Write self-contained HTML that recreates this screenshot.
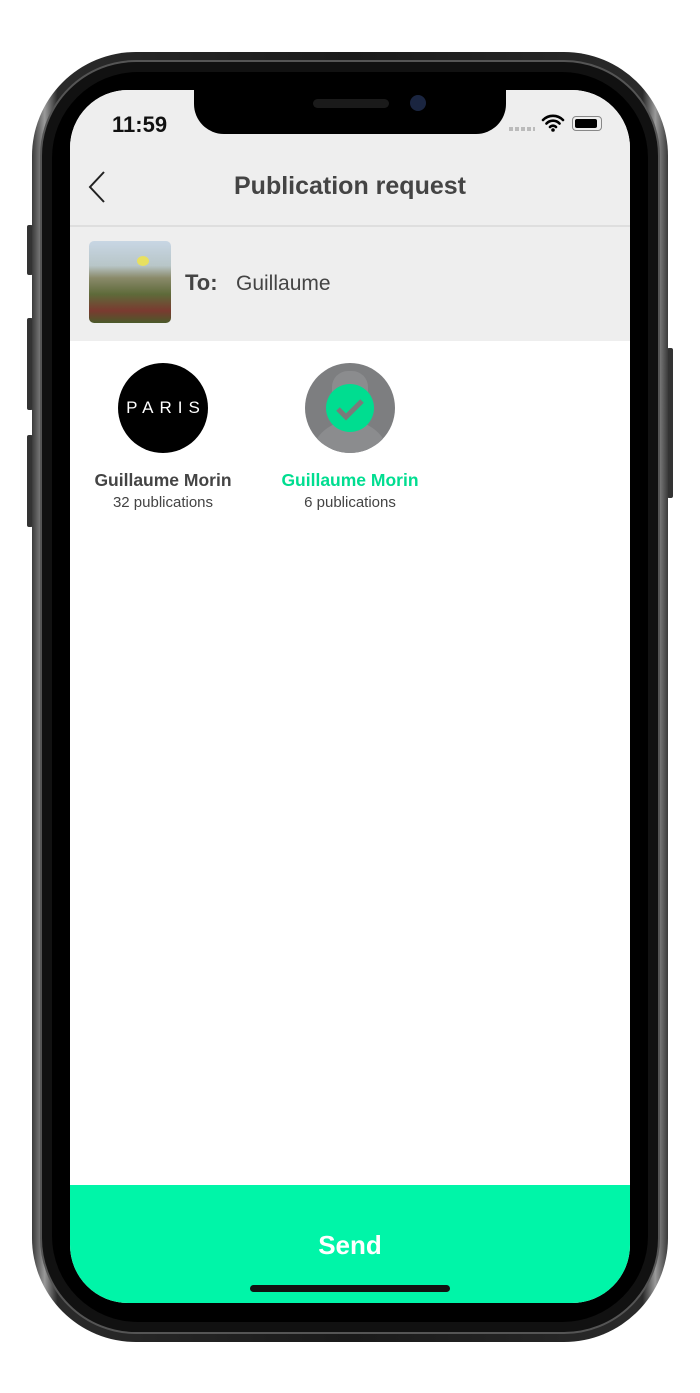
<!DOCTYPE html>
<html><head><meta charset="utf-8"><style>
*{margin:0;padding:0;box-sizing:border-box}
body{width:700px;height:1393px;background:#fff;position:relative;overflow:hidden;font-family:"Liberation Sans",Arial,sans-serif}
.outer{position:absolute;left:32px;top:52px;width:636px;height:1290px;border-radius:104px;background:linear-gradient(90deg,#3a3a3a,#9a9a9a 2%,#2a2a2a 4%,#1a1a1a 50%,#2a2a2a 96%,#9a9a9a 98%,#3a3a3a)}
.ring{position:absolute;left:40px;top:60px;width:620px;height:1274px;border-radius:96px;background:#111;border:2px solid #555}
.bezel{position:absolute;left:52px;top:72px;width:596px;height:1250px;border-radius:86px;background:#000}
.btn{position:absolute;background:#333;border-radius:2px}
.screen{position:absolute;left:70px;top:90px;width:560px;height:1213px;border-radius:58px;overflow:hidden;background:#fff}
.hdr{position:absolute;left:0;top:0;width:560px;height:251px;background:#eeeeee}
.div{position:absolute;left:0;top:135px;width:560px;height:2px;background:#dedede}
.notch{position:absolute;left:124px;top:0;width:312px;height:44px;background:#000;border-radius:0 0 30px 30px}
.time{position:absolute;left:42px;top:22px;font-size:22px;font-weight:bold;color:#111}
.title{position:absolute;left:0;width:560px;top:82px;text-align:center;font-size:25px;font-weight:bold;color:#444}
.send{position:absolute;left:0;top:1095px;width:560px;height:118px;background:#00f5a8}
.home{position:absolute;left:180px;top:1195px;width:200px;height:7px;border-radius:4px;background:#111}
.av{position:absolute;width:90px;height:90px;border-radius:50%}
.nm{position:absolute;width:200px;text-align:center;font-size:17.5px;font-weight:bold}
.pb{position:absolute;width:200px;text-align:center;font-size:15px;color:#444}
</style></head><body>
<div class="btn" style="left:27px;top:225px;width:6px;height:50px"></div>
<div class="btn" style="left:27px;top:318px;width:6px;height:92px"></div>
<div class="btn" style="left:27px;top:435px;width:6px;height:92px"></div>
<div class="btn" style="left:667px;top:348px;width:6px;height:150px"></div>
<div class="outer"></div><div class="ring"></div><div class="bezel"></div>
<div class="screen">
 <div class="hdr"></div><div class="div"></div>
 <div class="notch"></div>
 <div style="position:absolute;left:243px;top:9px;width:76px;height:9px;border-radius:5px;background:#1a1a1a"></div>
 <div style="position:absolute;left:340px;top:5px;width:16px;height:16px;border-radius:50%;background:#1a2540"></div>
 <div class="time">11:59</div>
 <div style="position:absolute;left:439px;top:37px;width:26px;height:4px;background:repeating-linear-gradient(90deg,#bbb 0 4px,transparent 4px 6px)"></div>
 <svg style="position:absolute;left:471px;top:24px" width="24" height="18" viewBox="0 0 24 18"><path d="M2 6a14 14 0 0 1 20 0M5.5 9.5a9 9 0 0 1 13 0M9 13a4 4 0 0 1 6 0" stroke="#000" stroke-width="2.6" fill="none" stroke-linecap="round"/><circle cx="12" cy="16" r="1.8"/></svg>
 <div style="position:absolute;left:502px;top:26px;width:30px;height:15px;border:1.5px solid #888;border-radius:4px"><div style="margin:1.5px;width:22px;height:9px;background:#000;border-radius:2px"></div></div>
 <svg style="position:absolute;left:16px;top:80px" width="22" height="34"><path d="M18 2L4 17l14 15" stroke="#222" stroke-width="2" fill="none"/></svg>
 <div class="title">Publication request</div>
 <div style="position:absolute;left:19px;top:151px;width:82px;height:82px;border-radius:5px;background:linear-gradient(180deg,#c8d6e4 0%,#b8c6c8 30%,#8a8a6a 45%,#5e6a3a 65%,#7a3a30 85%,#4a5a2a 100%)"></div>
 <div style="position:absolute;left:67px;top:166px;width:12px;height:10px;border-radius:50%;background:#e8e060"></div>
 <div style="position:absolute;left:115px;top:180px;font-size:22px;font-weight:bold;color:#444">To:</div>
 <div style="position:absolute;left:166px;top:182px;font-size:21px;color:#444">Guillaume</div>
 <div class="av" style="left:48px;top:273px;background:#000;color:#fff;font-size:17px;letter-spacing:6px;text-align:center;line-height:90px;padding-left:6px">PARIS</div>
 <div class="av" style="left:235px;top:273px;background:#7d7e80;overflow:hidden">
  <div style="position:absolute;left:27px;top:8px;width:36px;height:40px;border-radius:16px;background:#8b8c8e"></div>
  <div style="position:absolute;left:5px;top:58px;width:80px;height:50px;border-radius:40px 40px 0 0;background:#8b8c8e"></div>
  <div style="position:absolute;left:21px;top:21px;width:48px;height:48px;border-radius:50%;background:#00dd90"></div>
  <svg style="position:absolute;left:21px;top:21px" width="48" height="48"><path d="M12 25l8 8 16-16" stroke="#7a7a7a" stroke-width="5" fill="none"/></svg>
 </div>
 <div class="nm" style="left:-7px;top:380px;color:#444">Guillaume Morin</div>
 <div class="pb" style="left:-7px;top:404px">32 publications</div>
 <div class="nm" style="left:180px;top:380px;color:#00dd90">Guillaume Morin</div>
 <div class="pb" style="left:180px;top:404px">6 publications</div>
 <div class="send"><div style="text-align:center;color:#fff;font-weight:bold;font-size:26px;margin-top:45px">Send</div></div>
 <div class="home"></div>
</div>
</body></html>
